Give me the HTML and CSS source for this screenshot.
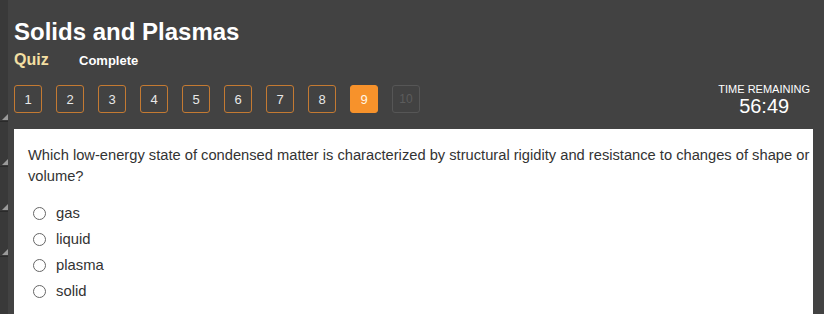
FILE: index.html
```html
<!DOCTYPE html>
<html>
<head>
<meta charset="utf-8">
<link rel="stylesheet" href="styles.css">
</head>
<body>
<div class="page">
  <div class="rail">
    <div class="seg"></div>
    <div class="seg"></div>
    <div class="seg"></div>
    <div class="seg"></div>
    <div class="seg"></div>
  </div>
  <div class="main">
    <h1 class="title">Solids and Plasmas</h1>
    <div class="sub">
      <span class="quiz">Quiz</span>
      <span class="status">Complete</span>
    </div>
    <div class="navrow">
      <div class="qnav">
        <span class="qb">1</span>
        <span class="qb">2</span>
        <span class="qb">3</span>
        <span class="qb">4</span>
        <span class="qb">5</span>
        <span class="qb">6</span>
        <span class="qb">7</span>
        <span class="qb">8</span>
        <span class="qb cur">9</span>
        <span class="qb dis">10</span>
      </div>
      <div class="timer">
        <div class="tlabel">TIME REMAINING</div>
        <div class="tval">56:49</div>
      </div>
    </div>
    <div class="panel">
      <p class="question">Which low-energy state of condensed matter is characterized by structural rigidity and resistance to changes of shape or volume?</p>
      <ul class="opts">
        <li><span class="radio"></span>gas</li>
        <li><span class="radio"></span>liquid</li>
        <li><span class="radio"></span>plasma</li>
        <li><span class="radio"></span>solid</li>
      </ul>
    </div>
  </div>
</div>
</body>
</html>
```
FILE: styles.css
```css
* { box-sizing: border-box; }
html, body {
  margin: 0;
  padding: 0;
  background: #424242;
  font-family: "Liberation Sans", Arial, sans-serif;
  overflow: hidden;
}
.page {
  display: flex;
  width: 824px;
  height: 314px;
}
.rail {
  width: 8px;
  flex: none;
  background: #393939;
  display: flex;
  flex-direction: column;
}
.seg {
  height: 45px;
  flex: none;
  position: relative;
  border-bottom: 1px solid #2a2a2a;
}
.seg:first-child { height: 122px; }
.seg:last-child { border-bottom: none; flex: 1; }
.seg:not(:last-child)::after {
  content: "";
  position: absolute;
  right: 0;
  bottom: 1px;
  width: 0;
  height: 0;
  border-left: 6px solid transparent;
  border-bottom: 6px solid #9a9a9a;
}
.main {
  flex: 1;
  padding: 0 11px 0 6px;
  display: flex;
  flex-direction: column;
}
.title {
  margin: 18px 0 0 0;
  font-size: 24px;
  line-height: 28px;
  font-weight: bold;
  color: #ffffff;
}
.sub {
  margin-top: 5px;
  display: flex;
  align-items: baseline;
  height: 18px;
}
.quiz {
  font-size: 16px;
  font-weight: bold;
  color: #f3dfa2;
  width: 65px;
}
.status {
  font-size: 13px;
  font-weight: bold;
  color: #ffffff;
}
.navrow {
  margin-top: 16px;
  display: flex;
  justify-content: space-between;
  align-items: flex-start;
  height: 44px;
}
.qnav {
  display: flex;
  gap: 14px;
}
.qb {
  width: 28px;
  height: 28px;
  border: 1px solid #c47a32;
  border-radius: 3px;
  color: #e8e8e8;
  font-size: 13px;
  display: flex;
  align-items: center;
  justify-content: center;
}
.qb.cur {
  background: #f7922b;
  border-color: #f7922b;
  color: #fff6e8;
}
.qb.dis {
  border-color: #565656;
  color: #5c5c5c;
  font-size: 12px;
}
.timer {
  margin-top: -2px;
  text-align: center;
  color: #ffffff;
  padding-right: 3px;
}
.tlabel {
  font-size: 11px;
  line-height: 12px;
}
.tval {
  font-size: 20px;
  line-height: 22px;
}
.panel {
  background: #ffffff;
  flex: 1;
  padding: 16px 0 0 14px;
}
.question {
  margin: 0;
  font-size: 14.7px;
  line-height: 21px;
  color: #333333;
}
.opts {
  list-style: none;
  margin: 13px 0 0 0;
  padding: 0 0 0 5px;
}
.opts li {
  display: flex;
  align-items: center;
  height: 26px;
  font-size: 14.8px;
  color: #333333;
}
.radio {
  width: 13px;
  height: 13px;
  border: 1px solid #666666;
  border-radius: 50%;
  margin-right: 10px;
  flex: none;
}
```
